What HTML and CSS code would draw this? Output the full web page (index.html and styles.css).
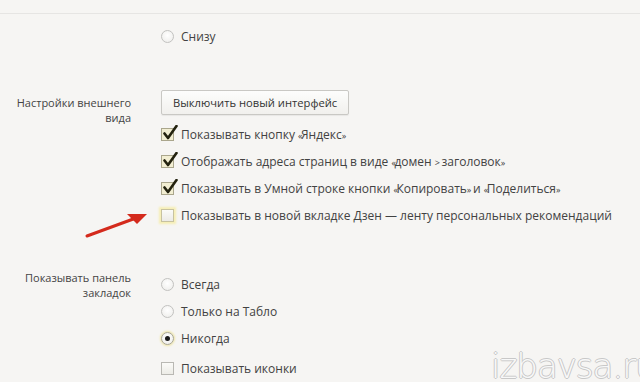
FILE: index.html
```html
<!DOCTYPE html>
<html lang="ru">
<head>
<meta charset="utf-8">
<title>Настройки</title>
<link rel="stylesheet" href="styles.css">
</head>
<body>
<div class="page">
  <div class="topbar"></div>

  <div class="section s1">
    <div class="label"></div>
    <div class="controls">
      <div class="row"><span class="radio"></span><span>Снизу</span></div>
    </div>
  </div>

  <div class="section s2">
    <div class="label">Настройки внешнего<br>вида</div>
    <div class="controls">
      <button class="btn">Выключить новый интерфейс</button>
      <div class="rows">
        <div class="row"><span class="cb checked"><svg viewBox="0 0 16 16" width="16" height="16"><path d="M2.5 8.5 L6 13 L14.5 1" fill="none" stroke="#23220f" stroke-width="2.6" stroke-linecap="round" stroke-linejoin="round"/></svg></span><span>Показывать кнопку <span class="q">«</span>Яндекс<span class="q">»</span></span></div>
        <div class="row"><span class="cb checked"><svg viewBox="0 0 16 16" width="16" height="16"><path d="M2.5 8.5 L6 13 L14.5 1" fill="none" stroke="#23220f" stroke-width="2.6" stroke-linecap="round" stroke-linejoin="round"/></svg></span><span>Отображать адреса страниц в виде <span class="q">«</span>домен <span class="q">&gt;</span> заголовок<span class="q">»</span></span></div>
        <div class="row"><span class="cb checked"><svg viewBox="0 0 16 16" width="16" height="16"><path d="M2.5 8.5 L6 13 L14.5 1" fill="none" stroke="#23220f" stroke-width="2.6" stroke-linecap="round" stroke-linejoin="round"/></svg></span><span>Показывать в Умной строке кнопки <span class="q">«</span>Копировать<span class="q">»</span> и <span class="q">«</span>Поделиться<span class="q">»</span></span></div>
        <div class="row"><span class="cb focus"></span><span>Показывать в новой вкладке Дзен — ленту персональных рекомендаций</span></div>
      </div>
    </div>
  </div>

  <div class="section s3">
    <div class="label">Показывать панель<br>закладок</div>
    <div class="controls">
      <div class="row"><span class="radio"></span><span>Всегда</span></div>
      <div class="row"><span class="radio"></span><span>Только на Табло</span></div>
      <div class="row"><span class="radio on"></span><span>Никогда</span></div>
      <div class="row last"><span class="cb"></span><span>Показывать иконки</span></div>
    </div>
  </div>

  <svg class="arrow" viewBox="0 0 70 32" width="70" height="32">
    <path d="M3 29 L52 11" stroke="#d42a1c" stroke-width="3" stroke-linecap="round" fill="none"/>
    <path d="M63 7 L43 7 L53 17 Z" fill="#d42a1c"/>
  </svg>

  <div class="watermark">izbavsa.ru</div>
</div>
</body>
</html>
```
FILE: styles.css
```css
html, body {
  margin: 0;
  padding: 0;
  background: #f6f5f3;
}
.page {
  position: relative;
  width: 640px;
  height: 382px;
  overflow: hidden;
  font-family: "Open Sans", "Noto Sans", sans-serif;
  font-size: 12px;
  color: #424242;
}
.topbar {
  height: 13px;
  border-bottom: 1px solid #e6e5e3;
}
.section {
  display: grid;
  grid-template-columns: 131px 1fr;
  column-gap: 30px;
}
.label {
  text-align: right;
  font-size: 11px;
  line-height: 15px;
  color: #444;
}
.s1 {
  margin-top: 12px;
}
.s2 {
  margin-top: 43px;
}
.s2 .label {
  padding-top: 5px;
}
.s3 {
  margin-top: 41px;
}
.s3 .controls {
  padding-top: 1px;
}
.row {
  height: 27px;
  display: flex;
  align-items: center;
  gap: 7px;
  white-space: nowrap;
}
.s1 .row {
  height: 21px;
}
.rows {
  margin-top: 6px;
}
.row.last {
  margin-top: 3px;
}
.q {
  font-size: 9px;
  letter-spacing: -1.5px;
}
.btn {
  font-family: inherit;
  font-size: 11.2px;
  color: #333;
  height: 25px;
  padding: 0 11px;
  background: linear-gradient(#fdfdfc, #f1f0ed);
  border: 1px solid #c9c8c4;
  border-radius: 2px;
  box-shadow: 0 1px 1px rgba(0,0,0,0.06);
}
.radio {
  width: 11px;
  height: 11px;
  border-radius: 50%;
  border: 1px solid #c2c2c0;
  background: radial-gradient(circle at 50% 40%, #ffffff, #ecebe8);
  flex: none;
  position: relative;
}
.radio.on {
  border-color: #a9a690;
  box-shadow: 0 0 2px 1px #efe6a6;
}
.radio.on::after {
  content: "";
  position: absolute;
  left: 3px;
  top: 3px;
  width: 5px;
  height: 5px;
  border-radius: 50%;
  background: #1b1b1b;
}
.cb {
  width: 11px;
  height: 11px;
  border: 1px solid #b9b8b3;
  background: linear-gradient(#fbfbf8, #ecebe6);
  flex: none;
  position: relative;
}
.cb.checked {
  background: #f2eed2;
  border-color: #aaa68c;
}
.cb svg {
  position: absolute;
  left: 0;
  top: -4px;
}
.cb.focus {
  border-color: #c7c2a0;
  box-shadow: 0 0 2px 2px #f6eeb3;
}
.arrow {
  position: absolute;
  left: 84px;
  top: 207px;
}
.watermark {
  position: absolute;
  left: 491px;
  top: 346px;
  font-family: "DejaVu Sans", sans-serif;
  font-size: 34px;
  font-weight: 300;
  color: #f8f8f8;
  text-shadow: -1px 0 #c8c8c8, 1px 0 #c8c8c8, 0 1px #c8c8c8, 0 -1px #c8c8c8;
  letter-spacing: -1px;
  white-space: nowrap;
}
```
